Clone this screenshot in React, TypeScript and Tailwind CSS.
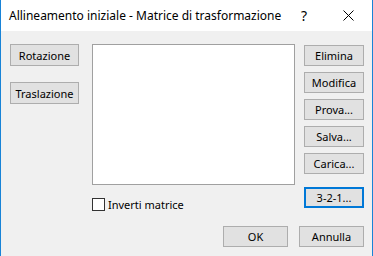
import React from "react";

const font = { fontFamily: '"Noto Sans", "Open Sans", Arial, sans-serif' };

function Btn({ label, className = "", def = false }: { label: string; className?: string; def?: boolean }) {
  return (
    <button
      className={`flex items-center justify-center bg-[#e1e1e1] text-[11px] text-black leading-none ${
        def ? "border-2 border-[#0078d7]" : "border border-[#adadad]"
      } ${className}`}
    >
      {label}
    </button>
  );
}

export default function App() {
  const rightButtons = ["Elimina", "Modifica", "Prova...", "Salva...", "Carica..."];

  return (
    <div
      className="w-[373px] h-[256px] flex flex-col bg-[#f0f0f0] border-x border-[#1883d7] overflow-hidden"
      style={font}
    >
      {/* title bar */}
      <div className="h-[31px] bg-white flex items-center shrink-0">
        <span className="ml-[8px] text-[12px] text-black">
          Allineamento iniziale - Matrice di trasformazione
        </span>
        <span className="ml-auto mr-[36px] text-[14px] text-black leading-none">?</span>
        <svg className="mr-[18px]" width="11" height="11" viewBox="0 0 11 11">
          <path d="M0.5 0.5 L10.5 10.5 M10.5 0.5 L0.5 10.5" stroke="#000" strokeWidth="1" fill="none" />
        </svg>
      </div>

      {/* body */}
      <div className="flex-1 flex flex-col">
        <div className="flex">
          <div className="ml-[9px] mt-[13px] w-[69px] flex flex-col gap-[16px]">
            <Btn label="Rotazione" className="h-[22px]" />
            <Btn label="Traslazione" className="h-[22px]" />
          </div>

          <div className="ml-[13px] mt-[13px] w-[203px] flex flex-col">
            <div className="h-[141px] bg-white border border-[#a0a0a0]" />
            <div className="mt-[13px] flex items-center">
              <div className="w-[13px] h-[13px] bg-white border border-[#333333]" />
              <span className="ml-[3px] text-[11px] text-black leading-none">Inverti matrice</span>
            </div>
          </div>

          <div className="ml-[9px] mt-[14px] w-[60px] flex flex-col gap-[6px]">
            {rightButtons.map((b) => (
              <Btn key={b} label={b} className="h-[21px]" />
            ))}
            <Btn label="3-2-1..." className="h-[21px] mt-[7px]" def />
          </div>
        </div>

        <div className="mt-auto mb-[9px] mr-[8px] flex justify-end gap-[11px]">
          <Btn label="OK" className="w-[65px] h-[21px]" />
          <Btn label="Annulla" className="w-[65px] h-[21px]" />
        </div>
      </div>
    </div>
  );
}
